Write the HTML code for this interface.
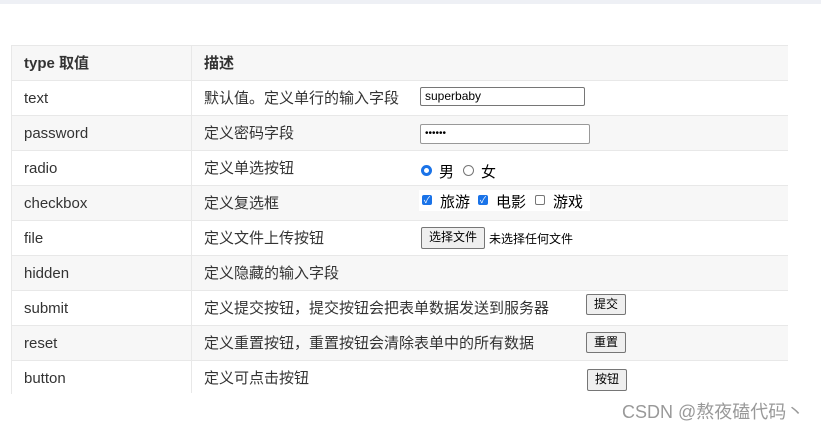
<!DOCTYPE html>
<html><head><meta charset="utf-8"><style>
body{margin:0;width:821px;height:430px;background:#fff;position:relative;overflow:hidden;font-family:"Liberation Sans","Noto Sans CJK SC",sans-serif;color:#333;font-size:15px}
.top{position:absolute;left:0;top:0;width:821px;height:4px;background:#eef0f5}
.row{position:absolute;left:11px;width:776px;height:34px;border-top:1px solid #e8e8e8;border-left:1px solid #e8e8e8}
.row.g{background:#f7f7f7}
.row .a{position:absolute;left:12px;top:8px;line-height:20px}
.row .b{position:absolute;left:192px;top:8px;line-height:20px}
.div{position:absolute;left:191px;top:45px;width:1px;height:348px;background:#e8e8e8}
.abs{position:absolute;box-sizing:border-box}
.inp{border:1px solid #767676;border-radius:2px;background:#fff;font-size:12px;padding:1px 4px;color:#000}
.btn{border:1px solid #767676;border-radius:2px;background:#efefef;font-size:12px;color:#000;text-align:center;line-height:19px}
.cb{width:10px;height:10px;border-radius:2px;background:#1a73e8;color:#fff;font-size:9px;line-height:10px;text-align:center}
</style></head><body>
<div class="top"></div>
<div class="row g" style="top:45px;height:35px"><span class="a" style="font-weight:bold;top:8px">type 取值</span><span class="b" style="font-weight:bold;top:8px">描述</span></div>
<div class="row" style="top:80px"><span class="a">text</span><span class="b">默认值。定义单行的输入字段</span></div>
<div class="row g" style="top:115px"><span class="a">password</span><span class="b">定义密码字段</span></div>
<div class="row" style="top:150px"><span class="a">radio</span><span class="b">定义单选按钮</span></div>
<div class="row g" style="top:185px"><span class="a">checkbox</span><span class="b">定义复选框</span></div>
<div class="row" style="top:220px"><span class="a">file</span><span class="b">定义文件上传按钮</span></div>
<div class="row g" style="top:255px"><span class="a">hidden</span><span class="b">定义隐藏的输入字段</span></div>
<div class="row" style="top:290px"><span class="a">submit</span><span class="b">定义提交按钮，提交按钮会把表单数据发送到服务器</span></div>
<div class="row g" style="top:325px"><span class="a">reset</span><span class="b">定义重置按钮，重置按钮会清除表单中的所有数据</span></div>
<div class="row" style="top:360px;height:33px"><span class="a">button</span><span class="b">定义可点击按钮</span></div>
<div class="div"></div>

<div class="abs inp" style="left:420px;top:87px;width:165px;height:19px;line-height:15px">superbaby</div>
<div class="abs inp" style="left:420px;top:124px;width:170px;height:20px;line-height:16px;font-size:10px;border-color:#999">••••••</div>
<div class="abs" style="left:421px;top:165px;width:11px;height:11px;border-radius:50%;border:3px solid #1a73e8;background:#fff"></div>
<span class="abs" style="left:439px;top:161px;font-size:15px;color:#000">男</span>
<div class="abs" style="left:463px;top:165px;width:11px;height:11px;border-radius:50%;border:1px solid #767676"></div>
<span class="abs" style="left:481px;top:161px;font-size:15px;color:#000">女</span>
<div class="abs" style="left:419px;top:190px;width:171px;height:21px;background:#fff"></div>
<div class="abs cb" style="left:422px;top:195px">✓</div>
<span class="abs" style="left:440px;top:191px;font-size:15px;color:#000">旅游</span>
<div class="abs cb" style="left:478px;top:195px">✓</div>
<span class="abs" style="left:496px;top:191px;font-size:15px;color:#000">电影</span>
<div class="abs" style="left:535px;top:195px;width:10px;height:10px;border:1px solid #767676;border-radius:2px"></div>
<span class="abs" style="left:553px;top:191px;font-size:15px;color:#000">游戏</span>
<div class="abs btn" style="left:421px;top:227px;width:64px;height:22px">选择文件</div>
<span class="abs" style="left:489px;top:230px;font-size:12px;color:#000">未选择任何文件</span>
<div class="abs btn" style="left:586px;top:294px;width:40px;height:21px">提交</div>
<div class="abs btn" style="left:586px;top:332px;width:40px;height:21px">重置</div>
<div class="abs btn" style="left:587px;top:369px;width:40px;height:22px">按钮</div>
<span class="abs" style="left:622px;top:398px;font-size:18px;color:#999">CSDN @熬夜磕代码丶</span>
</body></html>
